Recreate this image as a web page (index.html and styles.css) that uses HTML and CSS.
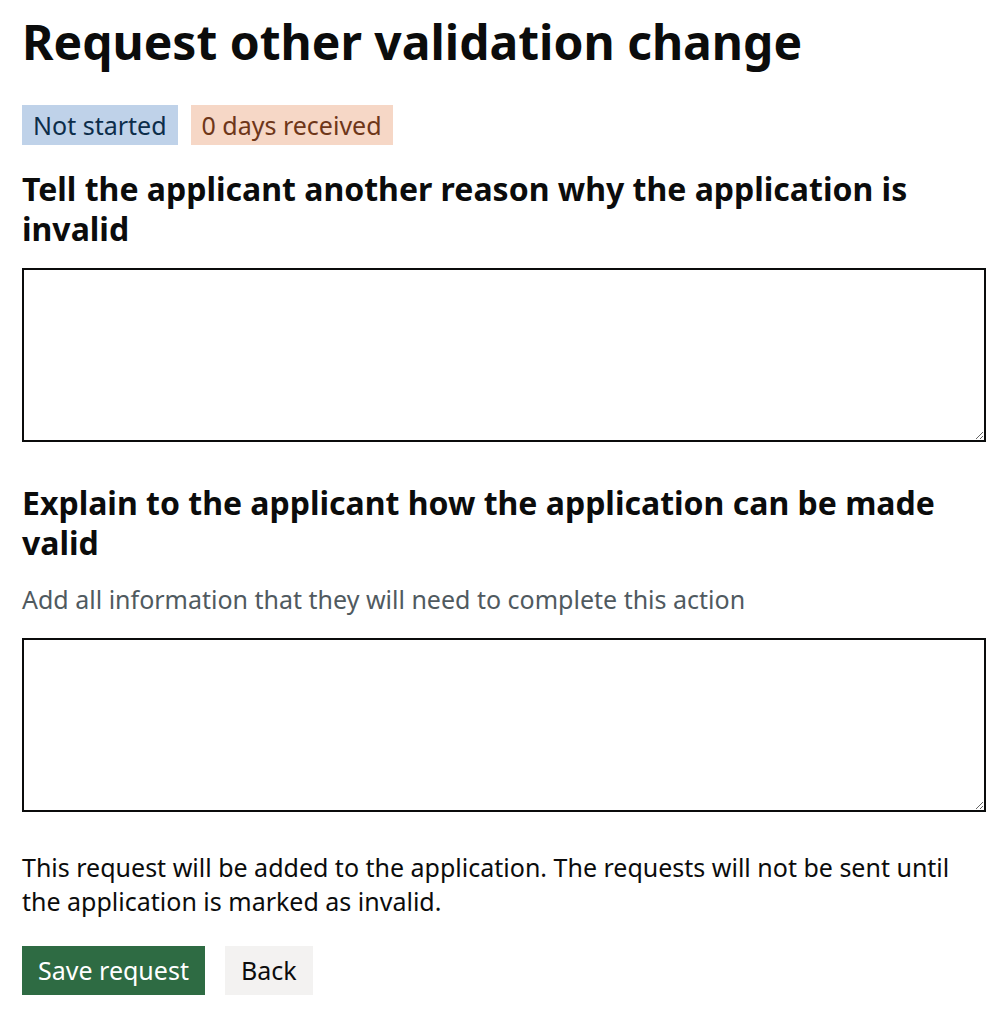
FILE: index.html
```html
<!DOCTYPE html>
<html lang="en">
<head>
    <meta charset="UTF-8">
    <meta name="viewport" content="width=device-width, initial-scale=1.0">
    <title>Request other validation change</title>
    <link rel="stylesheet" href="styles.css">
</head>
<body>
    <main class="page">
        <h1 class="page-title">Request other validation change</h1>

        <div class="tags">
            <span class="tag tag-blue">Not started</span>
            <span class="tag tag-orange">0 days received</span>
        </div>

        <form class="request-form">
            <div class="form-group">
                <label class="field-label" for="summary">Tell the applicant another reason why the application is invalid</label>
                <textarea id="summary" class="textarea" rows="5"></textarea>
            </div>

            <div class="form-group form-group-second">
                <label class="field-label" for="suggestion">Explain to the applicant how the application can be made valid</label>
                <div class="hint">Add all information that they will need to complete this action</div>
                <textarea id="suggestion" class="textarea" rows="5"></textarea>
            </div>

            <p class="body-text">This request will be added to the application. The requests will not be sent until the application is marked as invalid.</p>

            <div class="button-group">
                <button type="submit" class="button">Save request</button>
                <a href="#" class="button button-secondary">Back</a>
            </div>
        </form>
    </main>
</body>
</html>
```

FILE: styles.css
```css
body {
    font-family: "Noto Sans", "Open Sans", Arial, sans-serif;
    color: #0b0c0c;
    background-color: white;
    margin: 0;
    padding: 0;
}
.page {
    padding: 0 22px;
}
.page-title {
    font-size: 48px;
    line-height: 50px;
    font-weight: bold;
    margin: 17px 0 0;
}
.tags {
    display: flex;
    gap: 13px;
    margin-top: 38px;
}
.tag {
    display: inline-block;
    font-size: 25px;
    line-height: 30px;
    padding: 5px 11px;
}
.tag-blue {
    background-color: #bfd2e9;
    color: #0c2d4a;
}
.tag-orange {
    background-color: #f6d7c6;
    color: #6e3619;
}
.form-group {
    margin-top: 24px;
}
.form-group-second {
    margin-top: 41px;
}
.field-label {
    display: block;
    font-size: 32px;
    line-height: 40px;
    font-weight: bold;
    margin-bottom: 19px;
}
.hint {
    font-size: 25px;
    line-height: 34px;
    color: #505a5f;
    margin: 0 0 22px;
}
.textarea {
    display: block;
    width: 100%;
    height: 174px;
    box-sizing: border-box;
    border: 2px solid #0b0c0c;
    border-radius: 0;
    padding: 6px;
    font-family: inherit;
    font-size: 25px;
    margin: 0;
}
.body-text {
    font-size: 25px;
    line-height: 34px;
    margin: 38px 0 0;
}
.button-group {
    display: flex;
    gap: 20px;
    margin-top: 28px;
}
.button {
    display: inline-block;
    font-family: inherit;
    font-size: 25px;
    line-height: 30px;
    padding: 9px 16px 10px;
    border: none;
    border-radius: 0;
    background-color: #2e6b43;
    color: white;
    box-shadow: 0 3px 0 #0e2b18;
    text-decoration: none;
    cursor: pointer;
}
.button-secondary {
    background-color: #f3f2f1;
    color: #0b0c0c;
    box-shadow: 0 3px 0 #929191;
}
```
